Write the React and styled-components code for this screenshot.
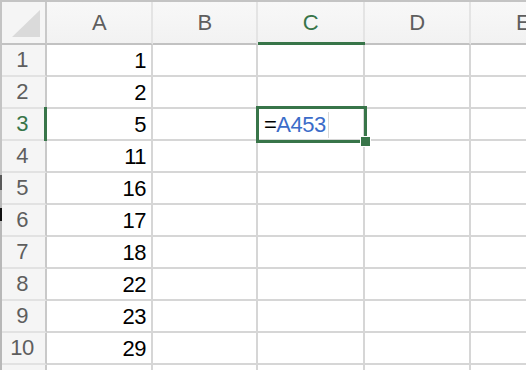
import React from "react";
import styled, { createGlobalStyle } from "styled-components";

const GREEN = "#387549";
const GRID = "#d6d6d6";

const Global = createGlobalStyle`
  html, body {
    margin: 0;
    padding: 0;
    background: #ffffff;
    overflow: hidden;
  }
  body {
    font-family: "Liberation Sans", Arial, sans-serif;
  }
`;

const Frame = styled.div`
  display: flex;
  width: 526px;
  height: 370px;
  overflow: hidden;
`;

// window edge on the left, with the two dark marks the screenshot caught
const LeftEdge = styled.div`
  flex: 0 0 2px;
  background: linear-gradient(
    #c4c4c4 0 175px,
    #5a5a5a 175px 190px,
    #b8b8b8 190px 208px,
    #111 208px 221px,
    #b8b8b8 221px
  );
`;

const Sheet = styled.div`
  flex: 1;
  min-width: 0;
  border-top: 2px solid #c4c4c4;
  display: grid;
  grid-template-columns: 45px 106px 105px 107px 106px 106px;
  grid-template-rows: 43px repeat(10, 32px) 32px;
  overflow: hidden;
  font-size: 22px;
  letter-spacing: -0.5px;
`;

const Corner = styled.div`
  background: #f5f5f5;
  border-right: 2px solid #c9c9c9;
  border-bottom: 2px solid #c2c2c2;
  padding: 8px 5px 6px 10px;
  display: flex;
`;

const CornerTriangle = styled.div`
  flex: 1;
  background: #dadada;
  clip-path: polygon(0 100%, 100% 0, 100% 100%);
`;

const ColHeader = styled.div`
  position: relative;
  background: linear-gradient(#f8f8f8, #f2f2f2);
  border-right: 2px solid #e4e4e4;
  border-bottom: 2px solid #c2c2c2;
  display: flex;
  align-items: center;
  justify-content: center;
  color: ${(p) => (p.$active ? GREEN : "#5e5e5e")};
  padding-top: 1px;

  &::after {
    content: "";
    display: ${(p) => (p.$active ? "block" : "none")};
    position: absolute;
    left: 0;
    right: -2px;
    bottom: -2px;
    height: 3px;
    background: ${GREEN};
  }
`;

const RowHeader = styled.div`
  position: relative;
  background: #f5f5f5;
  border-right: 2px solid #c9c9c9;
  border-bottom: 2px solid #e2e2e2;
  display: flex;
  align-items: center;
  justify-content: center;
  color: ${(p) => (p.$active ? GREEN : "#5e5e5e")};
  padding-right: 3px;
  z-index: ${(p) => (p.$active ? 1 : "auto")};

  &::after {
    content: "";
    display: ${(p) => (p.$active ? "block" : "none")};
    position: absolute;
    top: -2px;
    right: -2px;
    bottom: -2px;
    width: 3px;
    background: ${GREEN};
  }
`;

const Cell = styled.div`
  position: relative;
  border-right: 2px solid ${GRID};
  border-bottom: 2px solid ${GRID};
  display: flex;
  align-items: center;
  justify-content: ${(p) => (p.$num ? "flex-end" : "flex-start")};
  padding: ${(p) => (p.$num ? "1px 5px 0 0" : "1px 0 0 6px")};
  color: #000;
  white-space: nowrap;
`;

const Selection = styled.div`
  position: absolute;
  z-index: 2;
  left: -2px;
  top: -3px;
  width: 111px;
  height: 37px;
  box-sizing: border-box;
  border: 3px solid ${GREEN};
  pointer-events: none;
`;

const FillHandle = styled.div`
  position: absolute;
  right: -7px;
  bottom: -7px;
  width: 9px;
  height: 9px;
  background: ${GREEN};
  border: 1px solid #fff;
`;

const Formula = styled.span`
  display: inline-flex;
  align-items: center;
`;

const Ref = styled.span`
  color: #3b6cc9;
  border-right: 1px solid #d8d8d8;
  padding-right: 2px;
  line-height: 26px;
`;

const columns = ["A", "B", "C", "D", "E"];
const values = [1, 2, 5, 11, 16, 17, 18, 22, 23, 29];

export default function App() {
  return (
    <>
      <Global />
      <Frame>
        <LeftEdge />
        <Sheet>
          <Corner>
            <CornerTriangle />
          </Corner>
          {columns.map((c) => (
            <ColHeader key={c} $active={c === "C"}>
              {c}
            </ColHeader>
          ))}

          {[...values, null].map((v, i) => (
            <React.Fragment key={i}>
              <RowHeader $active={i === 2}>{v === null ? "" : i + 1}</RowHeader>
              <Cell $num>{v}</Cell>
              <Cell />
              <Cell>
                {i === 2 && (
                  <>
                    <Formula>
                      =<Ref>A453</Ref>
                    </Formula>
                    <Selection>
                      <FillHandle />
                    </Selection>
                  </>
                )}
              </Cell>
              <Cell />
              <Cell />
            </React.Fragment>
          ))}
        </Sheet>
      </Frame>
    </>
  );
}
